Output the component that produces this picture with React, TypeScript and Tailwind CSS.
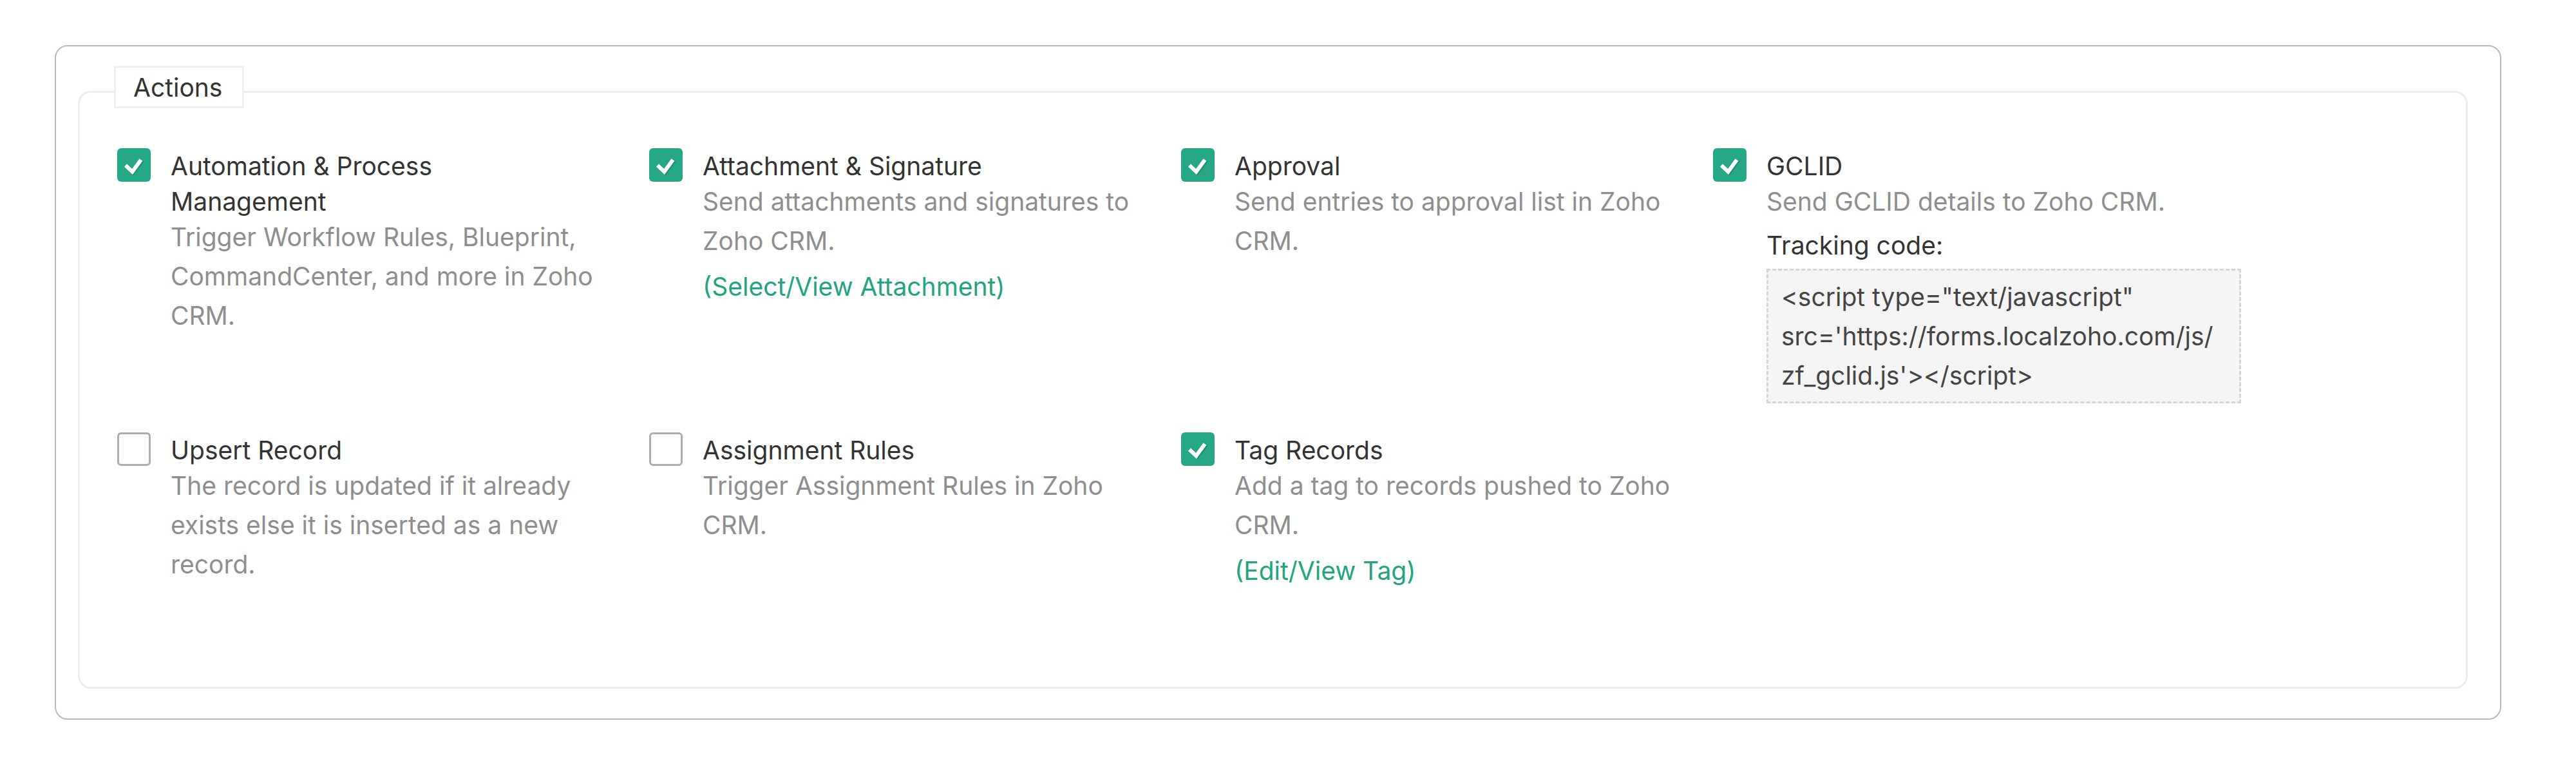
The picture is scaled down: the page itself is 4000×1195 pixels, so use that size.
import React from "react";

type Item = {
  title: React.ReactNode;
  desc?: string;
  checked: boolean;
  link?: string;
  gclid?: boolean;
};

const row1: Item[] = [
  {
    title: (
      <>
        Automation &amp; Process
        <br />
        Management
      </>
    ),
    desc: "Trigger Workflow Rules, Blueprint, CommandCenter, and more in Zoho CRM.",
    checked: true,
  },
  {
    title: "Attachment & Signature",
    desc: "Send attachments and signatures to Zoho CRM.",
    checked: true,
    link: "(Select/View Attachment)",
  },
  {
    title: "Approval",
    desc: "Send entries to approval list in Zoho CRM.",
    checked: true,
  },
  {
    title: "GCLID",
    desc: "Send GCLID details to Zoho CRM.",
    checked: true,
    gclid: true,
  },
];

const row2: Item[] = [
  {
    title: "Upsert Record",
    desc: "The record is updated if it already exists else it is inserted as a new record.",
    checked: false,
  },
  {
    title: "Assignment Rules",
    desc: "Trigger Assignment Rules in Zoho CRM.",
    checked: false,
  },
  {
    title: "Tag Records",
    desc: "Add a tag to records pushed to Zoho CRM.",
    checked: true,
    link: "(Edit/View Tag)",
  },
];

function Checkbox({ checked }: { checked: boolean }) {
  if (!checked) {
    return (
      <div className="w-[52px] h-[52px] shrink-0 rounded-[6px] border-[3px] border-[#adadad] bg-white" />
    );
  }
  return (
    <div className="w-[52px] h-[52px] shrink-0 rounded-[6px] bg-[#26a887] flex items-center justify-center">
      <svg width="52" height="52" viewBox="0 0 52 52">
        <polyline
          points="15,27 25,37.5 39,19"
          fill="none"
          stroke="#1c6f5a"
          strokeOpacity="0.55"
          strokeWidth="6"
          strokeLinejoin="miter"
        />
        <polyline
          points="13,26.5 23.5,36.5 37,18"
          fill="none"
          stroke="#ffffff"
          strokeWidth="6"
          strokeLinejoin="miter"
        />
      </svg>
    </div>
  );
}

function ActionItem({ item }: { item: Item }) {
  return (
    <div className="flex gap-[31px]">
      <Checkbox checked={item.checked} />
      <div className="flex flex-col w-[700px]">
        <div className="text-[39px] leading-[55px] text-[#333333]">{item.title}</div>
        {item.desc && (
          <div className="text-[39px] leading-[61px] text-[#8e8e8e] mt-[-3px]">{item.desc}</div>
        )}
        {item.link && (
          <div className="text-[39px] leading-[61px] text-[#22a382] mt-[10px]">{item.link}</div>
        )}
        {item.gclid && (
          <>
            <div className="text-[39px] leading-[55px] text-[#333333] mt-[10px]">Tracking code:</div>
            <div className="mt-[9px] w-[737px] border-[3px] border-dashed border-[#d4d4d4] bg-[#f4f4f4] px-[20px] py-[10px] text-[39px] leading-[61px] text-[#444444] whitespace-nowrap">
              &lt;script type="text/javascript"
              <br />
              src='https://forms.localzoho.com/js/
              <br />
              zf_gclid.js'&gt;&lt;/script&gt;
            </div>
          </>
        )}
      </div>
    </div>
  );
}

export default function App() {
  return (
    <div className="min-h-screen bg-white font-[Inter,sans-serif] pt-[70px] pl-[85px]">
      <div className="w-[3799px] rounded-[20px] border-2 border-[#b9b9b9] pt-[69px] pl-[34px] pr-[50px] pb-[46px]">
        <div className="relative rounded-[20px] border-[3px] border-[#ececec] pt-[86px] pl-[58px] pb-[150px]">
          <div className="absolute left-[53px] top-[-42px] h-[66px] w-[202px] flex items-center bg-white border-[3px] border-[#efefef] pl-[27px] text-[39px] leading-[55px] text-[#333333]">
            Actions
          </div>
          <div className="grid grid-cols-[repeat(4,826px)] gap-y-[45px]">
            {row1.map((it, i) => (
              <ActionItem key={"a" + i} item={it} />
            ))}
            {row2.map((it, i) => (
              <ActionItem key={"b" + i} item={it} />
            ))}
          </div>
        </div>
      </div>
    </div>
  );
}
